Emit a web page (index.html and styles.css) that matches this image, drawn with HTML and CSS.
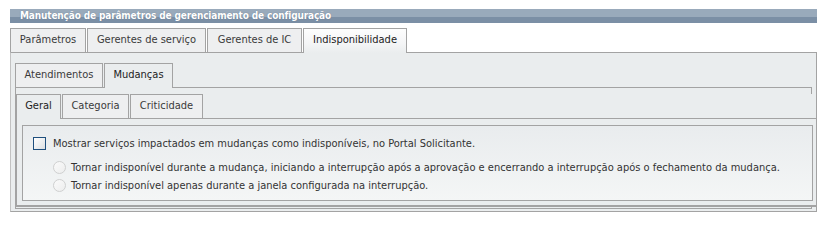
FILE: index.html
```html
<!DOCTYPE html>
<html lang="pt-BR">
<head>
<meta charset="utf-8">
<title>Manutenção de parâmetros</title>
<link rel="stylesheet" href="styles.css">
</head>
<body>
<div class="page">
  <div class="titlebar">Manutenção de parâmetros de gerenciamento de configuração</div>
  <div class="tabs">
    <div class="tab t-param">Parâmetros</div>
    <div class="tab t-gserv">Gerentes de serviço</div>
    <div class="tab t-gic">Gerentes de IC</div>
    <div class="tab active top t-indisp">Indisponibilidade</div>
  </div>
  <div class="panel p1">
    <div class="tabs">
      <div class="tab t-atend">Atendimentos</div>
      <div class="tab active t-mud">Mudanças</div>
    </div>
    <div class="panel p2">
      <div class="sub">
        <div class="tabs">
          <div class="tab active t-geral">Geral</div>
          <div class="tab t-cat">Categoria</div>
          <div class="tab t-crit">Criticidade</div>
        </div>
        <div class="panel p3">
          <div class="box">
            <label class="row first"><input type="checkbox" class="chk"><span>Mostrar serviços impactados em mudanças como indisponíveis, no Portal Solicitante.</span></label>
            <label class="row opt"><input type="radio" name="m" class="rad" disabled><span>Tornar indisponível durante a mudança, iniciando a interrupção após a aprovação e encerrando a interrupção após o fechamento da mudança.</span></label>
            <label class="row opt"><input type="radio" name="m" class="rad" disabled><span>Tornar indisponível apenas durante a janela configurada na interrupção.</span></label>
          </div>
        </div>
      </div>
    </div>
  </div>
</div>
</body>
</html>
```
FILE: styles.css
```css
html, body {
  margin: 0;
  padding: 0;
  background: #ffffff;
}
body {
  font-family: "DejaVu Sans Condensed", "DejaVu Sans", Verdana, sans-serif;
  font-size: 11px;
  color: #333333;
}
.page {
  margin: 9px 0 0 10px;
  width: 807px;
}
.titlebar {
  height: 14px;
  line-height: 14px;
  padding-left: 10px;
  color: #ffffff;
  font-weight: bold;
  font-size: 10px;
  letter-spacing: -0.15px;
  background: linear-gradient(#99aabb 0, #99aabb 8px, #7b8fa5 8px, #7b8fa5 14px);
  text-shadow: 0 0 1px #5c6f85;
  white-space: nowrap;
}
.tabs {
  display: flex;
  gap: 1px;
  align-items: flex-end;
  height: 24px;
}
.page > .tabs {
  margin-top: 5px;
}
.tab {
  box-sizing: border-box;
  height: 24px;
  line-height: 22px;
  padding: 0;
  text-align: center;
  border: 1px solid #a3a3a3;
  border-bottom: none;
  background: #eeeff0;
  color: #3a3a3a;
  white-space: nowrap;
}
.tab.active {
  height: 25px;
  margin-bottom: -1px;
  background: #eaedee;
  position: relative;
  z-index: 1;
  color: #222222;
}
.tab.active.top {
  background: linear-gradient(#fdfdfd, #f4f5f6 60%, #eaedee);
}
.t-param { width: 76px; }
.t-gserv { width: 119px; }
.t-gic { width: 95px; }
.t-indisp { width: 104px; }
.t-atend { width: 88px; }
.t-mud { width: 69px; }
.t-geral { width: 45px; }
.t-cat { width: 67px; }
.t-crit { width: 73px; }
.panel {
  background: #eaedee;
  border: 1px solid #a3a3a3;
}
.p1 {
  border-left-color: #c2c2c2;
  padding: 10px 4px 2px 4px;
}
.p2 {
  padding: 6px 0 1px 0;
}
.sub {
  margin-right: -5px;
  background: #eaedee;
}
.p3 {
  border-right: none;
  border-bottom: 2px solid #a3a3a3;
  padding: 6px 3px 4px 5px;
}
.box {
  border: 1px solid #a3a3a3;
  background: linear-gradient(#e9ecee, #f4f6f6);
  padding: 8px 10px 6px 10px;
}
.row {
  display: flex;
  align-items: center;
  height: 18px;
  white-space: nowrap;
}
.row.first {
  margin-bottom: 6px;
}
.row.opt {
  padding-left: 20px;
}
.chk {
  appearance: none;
  -webkit-appearance: none;
  box-sizing: border-box;
  width: 13px;
  height: 13px;
  margin: 0 7px 0 0;
  border: 1px solid #1f4f7e;
  background: linear-gradient(135deg, #ffffff, #dcdfe2);
}
.rad {
  appearance: none;
  -webkit-appearance: none;
  box-sizing: border-box;
  width: 13px;
  height: 13px;
  margin: 0 5px 0 0;
  border: 1px solid #cfd0d0;
  border-radius: 50%;
  background: linear-gradient(135deg, #fbfbfb, #eceded);
}
```
